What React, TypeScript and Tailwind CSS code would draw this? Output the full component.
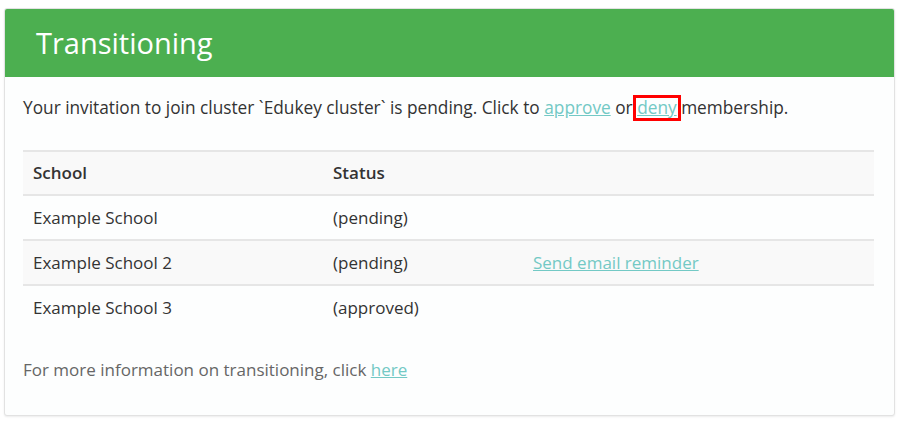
import React from "react";

const rows = [
  { school: "Example School", status: "(pending)", action: "" },
  { school: "Example School 2", status: "(pending)", action: "Send email reminder" },
  { school: "Example School 3", status: "(approved)", action: "" },
];

export default function App() {
  return (
    <div className="w-[903px] h-[424px] bg-white pt-[8px] pl-[4px]" style={{ fontFamily: '"Open Sans", sans-serif' }}>
      <div className="w-[891px] h-[408px] border border-[#e2e2e2] rounded-[3px] bg-[#fdfefe] shadow-[0_1px_2px_rgba(0,0,0,0.08)] overflow-hidden">
        <div className="h-[68px] bg-[#4caf50] flex items-center pl-[31px]">
          <h1 className="text-white text-[29px] leading-none -mt-[2px]">Transitioning</h1>
        </div>
        <div className="px-[18px] pt-[18px]">
          <p className="text-[17.27px] leading-[24px] text-[#333]">
            Your invitation to join cluster `Edukey cluster` is pending. Click to{" "}
            <a className="text-[#73c9c5] underline">approve</a> or{" "}
            <span className="inline-block border-[3px] border-[#ff0000] -mx-[4px] px-[1px] leading-[20px]">
              <a className="text-[#73c9c5] underline">deny</a>
            </span>{" "}
            membership.
          </p>
          <table className="mt-[29px] w-[851px] text-[17px] text-[#333] border-collapse">
            <thead>
              <tr className="bg-[#f9f9f9] border-t-2 border-b-2 border-[#e6e6e6]">
                <th className="text-left font-semibold h-[44px] pl-[10px] w-[300px]">School</th>
                <th className="text-left font-semibold pl-[10px] w-[200px]">Status</th>
                <th></th>
              </tr>
            </thead>
            <tbody>
              {rows.map((r, i) => (
                <tr
                  key={r.school}
                  className={`${i === 1 ? "bg-[#f9f9f9]" : ""} ${i < 2 ? "border-b-2 border-[#e6e6e6]" : ""}`}
                >
                  <td className="h-[45px] pl-[10px]">{r.school}</td>
                  <td className="pl-[10px]">{r.status}</td>
                  <td className="pl-[10px]">
                    {r.action && <a className="text-[#73c9c5] underline">{r.action}</a>}
                  </td>
                </tr>
              ))}
            </tbody>
          </table>
          <p className="mt-[28px] text-[17px] leading-[24px] text-[#666]">
            For more information on transitioning, click <a className="text-[#73c9c5] underline">here</a>
          </p>
        </div>
      </div>
    </div>
  );
}
